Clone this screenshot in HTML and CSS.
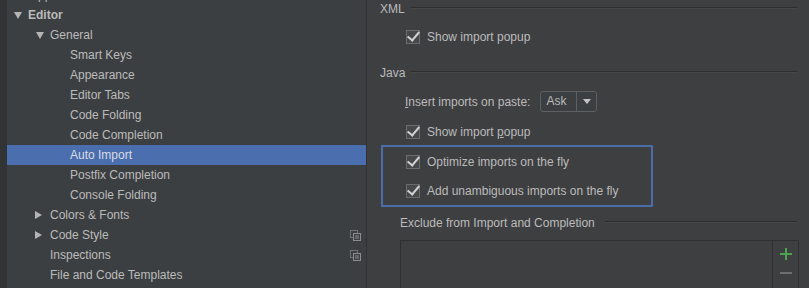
FILE: index.html
```html
<!DOCTYPE html>
<html>
<head>
    <title>Settings - Auto Import</title>
    <link rel="stylesheet" href="styles.css">
</head>
<body>
    <div class="app">
        <!-- 왼쪽 설정 트리 -->
        <div class="sidebar">
            <div class="tree">
                <div class="row lvl1 clipped"><span class="label">Appearance &amp; Behavior</span></div>
                <div class="row lvl0"><span class="arrow down"></span><span class="label bold">Editor</span></div>
                <div class="row lvl1"><span class="arrow down"></span><span class="label">General</span></div>
                <div class="row lvl2"><span class="label">Smart Keys</span></div>
                <div class="row lvl2"><span class="label">Appearance</span></div>
                <div class="row lvl2"><span class="label">Editor Tabs</span></div>
                <div class="row lvl2"><span class="label">Code Folding</span></div>
                <div class="row lvl2"><span class="label">Code Completion</span></div>
                <div class="row lvl2 selected"><span class="label">Auto Import</span></div>
                <div class="row lvl2"><span class="label">Postfix Completion</span></div>
                <div class="row lvl2"><span class="label">Console Folding</span></div>
                <div class="row lvl1"><span class="arrow right"></span><span class="label">Colors &amp; Fonts</span></div>
                <div class="row lvl1"><span class="arrow right"></span><span class="label">Code Style</span>
                    <svg class="copy-icon" width="11" height="11" viewBox="0 0 11 11"><rect x="0.5" y="0.5" width="7" height="7" fill="none" stroke="#6f7375"/><rect x="3.5" y="3.5" width="7" height="7" fill="#3c3f41" stroke="#8a8e90"/><path d="M5 6h4M5 8h4" stroke="#8a8e90"/></svg>
                </div>
                <div class="row lvl1 noarrow"><span class="label">Inspections</span>
                    <svg class="copy-icon" width="11" height="11" viewBox="0 0 11 11"><rect x="0.5" y="0.5" width="7" height="7" fill="none" stroke="#6f7375"/><rect x="3.5" y="3.5" width="7" height="7" fill="#3c3f41" stroke="#8a8e90"/><path d="M5 6h4M5 8h4" stroke="#8a8e90"/></svg>
                </div>
                <div class="row lvl1 noarrow"><span class="label">File and Code Templates</span></div>
            </div>
        </div>

        <!-- 오른쪽 설정 내용 -->
        <div class="content">
            <div class="group-title xml"><span>XML</span><div class="line"></div></div>
            <div class="check-row first"><span class="checkbox"></span><span>Show import popup</span></div>

            <div class="group-title java"><span>Java</span><div class="line"></div></div>
            <div class="field-row">
                <span><u>I</u>nsert imports on paste:</span>
                <div class="combo"><span class="combo-value">Ask</span><span class="combo-btn"></span></div>
            </div>
            <div class="check-row"><span class="checkbox"></span><span>Show import <u>p</u>opup</span></div>

            <div class="highlight">
                <div class="check-row"><span class="checkbox"></span><span>Optimize imports on the fly</span></div>
                <div class="check-row"><span class="checkbox"></span><span>Add unambiguous imports on the fly</span></div>
            </div>

            <div class="group-title exclude"><span>Exclude from Import and Completion</span><div class="line"></div></div>
            <div class="list-box">
                <div class="list-area"></div>
                <div class="list-tools">
                    <span class="tool-plus"></span>
                    <span class="tool-minus"></span>
                </div>
            </div>
        </div>
    </div>
</body>
</html>
```

FILE: styles.css
```css
* {
    margin: 0;
    padding: 0;
    box-sizing: border-box;
}

body {
    background: #3c3f41;
    font-family: 'Liberation Sans', Arial, sans-serif;
    font-size: 12px;
    color: #bbbbbb;
    overflow: hidden;
}

.app {
    display: flex;
    width: 809px;
    height: 288px;
    overflow: hidden;
}

/* 트리 */
.sidebar {
    width: 367px;
    flex-shrink: 0;
    background: #3c3f41;
    border-left: 7px solid #313335;
    border-right: 1px solid #323232;
    overflow: hidden;
}

.tree {
    margin-top: -15px;
}

.row {
    height: 20px;
    display: flex;
    align-items: center;
    position: relative;
    white-space: nowrap;
}

.row.lvl0 { padding-left: 6px; }
.row.lvl1 { padding-left: 28px; }
.row.lvl1.noarrow { padding-left: 43px; }
.row.lvl1.clipped { padding-left: 23px; }
.row.lvl2 { padding-left: 63px; }

.row.selected {
    background: #4b6eaf;
    color: #d8dde4;
}

.label.bold {
    font-weight: bold;
}

.arrow {
    width: 8px;
    height: 8px;
    margin-right: 7px;
    flex-shrink: 0;
}

.arrow.down {
    border-left: 4px solid transparent;
    border-right: 4px solid transparent;
    border-top: 7px solid #b4b4b4;
    border-bottom: 0;
    height: 7px;
    margin-left: 1px;
    margin-right: 6px;
}

.arrow.right {
    border-top: 4px solid transparent;
    border-bottom: 4px solid transparent;
    border-left: 7px solid #b4b4b4;
    width: 7px;
    margin-right: 8px;
}

.copy-icon {
    position: absolute;
    right: 5px;
    top: 5px;
}

/* 오른쪽 */
.content {
    flex: 1;
    background: #3e3f41;
    padding: 0 12px 0 13px;
    overflow: hidden;
}

.group-title {
    height: 16px;
    display: flex;
    align-items: center;
    gap: 6px;
    white-space: nowrap;
}

.group-title .line {
    flex: 1;
    height: 2px;
    border-top: 1px solid #2e2e2f;
    border-bottom: 1px solid #454648;
    margin-top: -3px;
}

.group-title.xml {
    margin-top: 1px;
}

.group-title.java {
    margin-top: 18px;
}

.group-title.exclude {
    margin-top: 8px;
    padding-left: 20px;
    gap: 10px;
}

.check-row {
    height: 20px;
    display: flex;
    align-items: center;
    padding-left: 26px;
    margin-top: 10px;
    white-space: nowrap;
}

.check-row.first {
    margin-top: 10px;
}

.checkbox {
    width: 14px;
    height: 14px;
    border: 1px solid #6a6c6e;
    background: #45494a;
    margin-right: 7px;
    position: relative;
    flex-shrink: 0;
}

.checkbox::after {
    content: '';
    position: absolute;
    left: 3px;
    top: -2px;
    width: 5px;
    height: 10px;
    border-right: 2px solid #d2d2d2;
    border-bottom: 2px solid #d2d2d2;
    transform: rotate(40deg);
}

.field-row {
    height: 21px;
    margin-top: 10px;
    display: flex;
    align-items: center;
    padding-left: 25px;
    gap: 10px;
}

.combo {
    display: flex;
    height: 21px;
    width: 57px;
    border: 1px solid #5e6060;
    border-radius: 3px;
    background: #3c3f41;
}

.combo-value {
    flex: 1;
    padding-left: 5px;
    line-height: 19px;
}

.combo-btn {
    width: 20px;
    border-left: 1px solid #5e6060;
    position: relative;
}

.combo-btn::after {
    content: '';
    position: absolute;
    left: 6px;
    top: 7px;
    border-left: 4px solid transparent;
    border-right: 4px solid transparent;
    border-top: 5px solid #c4c4c4;
}

.highlight {
    margin-top: 3px;
    margin-left: 1px;
    width: 272px;
    height: 62px;
    border: 2px solid #4a6ca8;
    padding-top: 3px;
}

.highlight .check-row {
    padding-left: 23px;
    margin-top: 2px;
}

.highlight .check-row + .check-row {
    margin-top: 9px;
}

.list-box {
    margin-top: 9px;
    margin-left: 20px;
    margin-right: -2px;
    height: 60px;
    border: 1px solid #2f3031;
    display: flex;
}

.list-area {
    flex: 1;
    background: #3e3f41;
}

.list-tools {
    width: 26px;
    border-left: 1px solid #2f3031;
    display: flex;
    flex-direction: column;
    align-items: center;
}

.tool-plus {
    width: 12px;
    height: 12px;
    margin-top: 7px;
    position: relative;
}

.tool-plus::before,
.tool-plus::after {
    content: '';
    position: absolute;
    background: #4da34f;
}

.tool-plus::before {
    left: 0;
    top: 5px;
    width: 12px;
    height: 2px;
}

.tool-plus::after {
    left: 5px;
    top: 0;
    width: 2px;
    height: 12px;
}

.tool-minus {
    width: 12px;
    height: 2px;
    background: #6e6e6e;
    margin-top: 12px;
}
```
